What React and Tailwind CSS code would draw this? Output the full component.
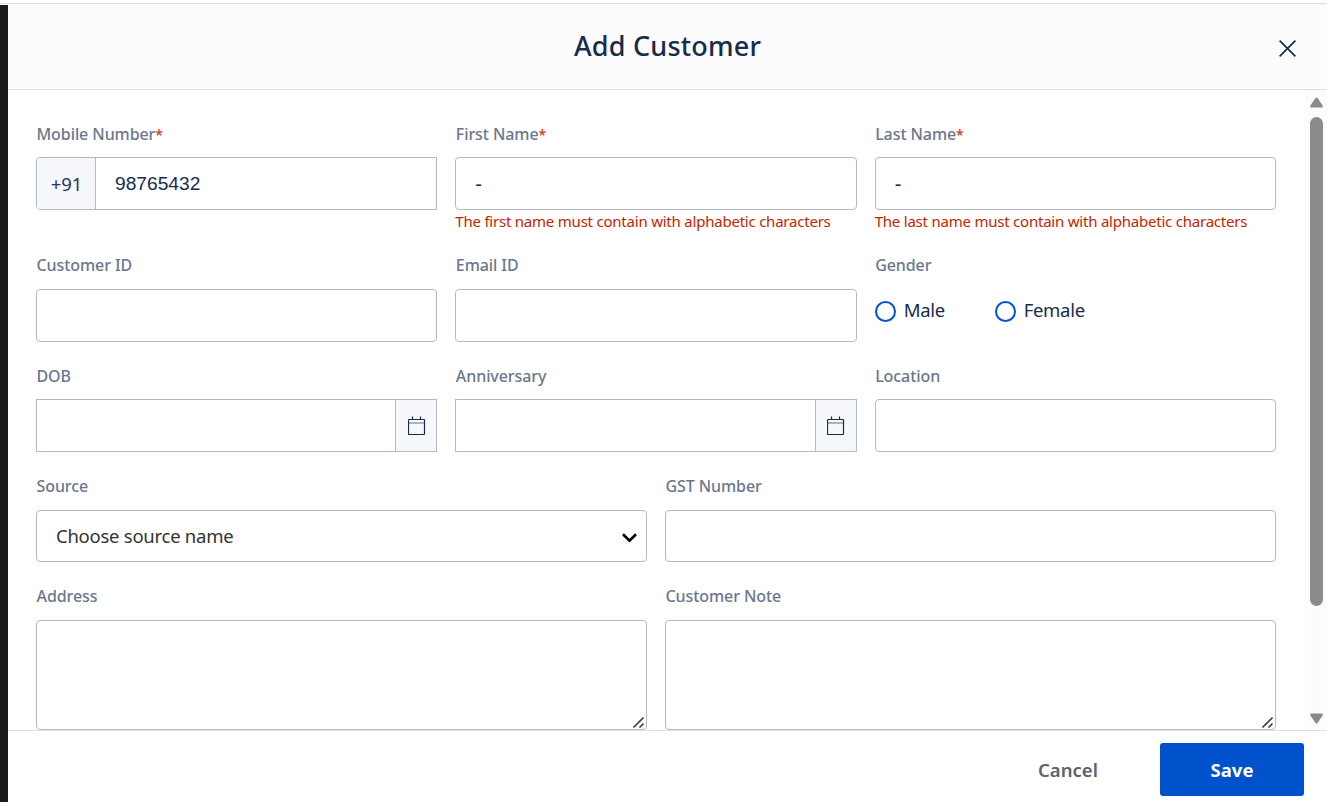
import React, { useState } from 'react';

const inputBase = 'w-full border border-[#b3b9c6] bg-white px-[19px] text-[#172b4d] outline-none';

function Field({ label, required, error, className = '', labelClass = '', children }) {
  return (
    <div className={className}>
      <label className={`block h-9 pl-[0.5px] whitespace-nowrap text-[16px] leading-6 font-medium tracking-[-0.08px] text-[#6b778c] ${labelClass}`}>
        {label}
        {required && <span className="text-[14px] text-[#de350b]">*</span>}
      </label>
      {children}
      {error && (
        <p className="-mt-px whitespace-nowrap text-[15px] leading-6 tracking-[-0.22px] text-[#bf2600]">{error}</p>
      )}
    </div>
  );
}

function CalendarIcon() {
  return (
    <svg className="ml-px" width="18" height="20" viewBox="0 0 18 20" fill="none" stroke="#172b4d">
      <rect x="0.5" y="3.5" width="16" height="15" rx="0.5" strokeWidth="1.2" />
      <path d="M0.5 7H16.5" strokeOpacity="0.65" />
      <path d="M4.5 0.5V3.5M12.5 0.5V3.5" strokeWidth="1.2" />
    </svg>
  );
}

function DateInput() {
  return (
    <div className="flex h-[53px] border border-[#b3b9c6]">
      <input className="min-w-0 flex-1 bg-white px-[19px] outline-none" />
      <button className="flex w-[41px] items-center justify-center border-l border-[#b3b9c6] bg-[#f5f7fa]">
        <CalendarIcon />
      </button>
    </div>
  );
}

function NoteArea() {
  return (
    <div className="relative">
      <textarea className={`${inputBase} block h-[110px] resize-none rounded-[4px]`} />
      <svg className="absolute right-[3px] bottom-[2px]" width="11" height="11" viewBox="0 0 11 11" stroke="#444" strokeWidth="1.6">
        <path d="M0.5 10.5L10.5 0.5M6.5 10.5L10.5 6.5" />
      </svg>
    </div>
  );
}

function Radio({ label, checked, onChange }) {
  return (
    <label className="flex items-center gap-2 text-[18.5px] leading-6 tracking-[-0.3px] text-[#172b4d]">
      <input
        type="radio"
        name="gender"
        checked={checked}
        onChange={onChange}
        className="mt-0.5 h-[21px] w-[21px] appearance-none rounded-full border-2 border-[#0052cc] bg-white checked:border-[6px]"
      />
      {label}
    </label>
  );
}

function Scrollbar() {
  return (
    <div className="flex w-[22px] flex-col items-center bg-[#fcfcfc] pt-[7px] pl-px pb-[6px]">
      <svg className="shrink-0" width="13" height="11" viewBox="0 0 14 11" fill="#8b8b8b">
        <path d="M5.9 0.6Q7 -0.5 8.1 0.6L13.6 8.6Q14.2 10.9 12.6 11H1.4Q-0.2 10.9 0.4 8.6Z" />
      </svg>
      <div className="mt-[9px] h-[489px] w-[13px] rounded-full bg-[#8b8b8b]" />
      <svg className="mt-auto shrink-0" width="13" height="11" viewBox="0 0 14 11" fill="#8b8b8b">
        <path d="M5.9 10.4Q7 11.5 8.1 10.4L13.6 2.4Q14.2 0.1 12.6 0H1.4Q-0.2 0.1 0.4 2.4Z" />
      </svg>
    </div>
  );
}

export default function App() {
  const [mobile, setMobile] = useState('98765432');
  const [firstName, setFirstName] = useState('-');
  const [lastName, setLastName] = useState('-');
  const [gender, setGender] = useState('');

  return (
    <div className="flex h-[802px] w-[1327px] flex-col overflow-hidden bg-white font-['Noto_Sans',sans-serif]">
      <div className="h-1 shrink-0 border-b border-[#dedede]" />
      <div className="h-px shrink-0 bg-[#fcfcfc]" />
      <div className="flex min-h-0 flex-1">
        <div className="w-2 shrink-0 bg-[#1a1a1a]" />

        <div className="flex min-w-0 flex-1 flex-col">
          <header className="flex h-[85px] shrink-0 items-center border-b border-[#dedfe2] bg-[#fcfcfc] pr-[31px] pl-12">
            <h1 className="flex-1 pb-px text-center text-[27px] font-medium tracking-[0.2px] text-[#172b4d]">
              Add Customer
            </h1>
            <button aria-label="Close" className="pt-[3px]">
              <svg width="17" height="17" viewBox="0 0 17 17" stroke="#172b4d" strokeWidth="1.7">
                <path d="M0.6 0.6L16.4 16.4M16.4 0.6L0.6 16.4" />
              </svg>
            </button>
          </header>

          <div className="flex h-[640px] shrink-0">
            <main className="flex-1 pt-[31px] pr-[29px] pl-7">
              <div className="grid grid-cols-6 grid-rows-[132px_110px_111px_110px_146px] gap-x-[18px]">
                <Field label="Mobile Number" required className="col-span-2" labelClass="pt-px">
                  <div className="flex h-[53px] overflow-hidden rounded-l-[4px] border border-[#b3b9c6]">
                    <span className="flex w-[59px] items-center justify-center border-r border-[#b3b9c6] bg-[#f5f7fa] pt-px pl-px text-[18.5px] text-[#253858]">
                      +91
                    </span>
                    <input
                      value={mobile}
                      onChange={(e) => setMobile(e.target.value)}
                      className="min-w-0 flex-1 px-[19px] pt-px font-['Liberation_Sans',sans-serif] text-[19.2px] text-[#172b4d] outline-none"
                    />
                  </div>
                </Field>
                <Field
                  label="First Name"
                  required
                  error="The first name must contain with alphabetic characters"
                  className="col-span-2"
                  labelClass="pt-px"
                >
                  <input
                    value={firstName}
                    onChange={(e) => setFirstName(e.target.value)}
                    className={`${inputBase} block h-[53px] rounded-[4px] pt-0.5 font-['Liberation_Sans',sans-serif] text-[20px]`}
                  />
                </Field>
                <Field
                  label="Last Name"
                  required
                  error="The last name must contain with alphabetic characters"
                  className="col-span-2"
                  labelClass="pt-px"
                >
                  <input
                    value={lastName}
                    onChange={(e) => setLastName(e.target.value)}
                    className={`${inputBase} block h-[53px] rounded-[4px] pt-0.5 font-['Liberation_Sans',sans-serif] text-[20px]`}
                  />
                </Field>

                <Field label="Customer ID" className="col-span-2">
                  <input className={`${inputBase} block h-[53px] rounded-[4px]`} />
                </Field>
                <Field label="Email ID" className="col-span-2">
                  <input className={`${inputBase} block h-[53px] rounded-[4px]`} />
                </Field>
                <Field label="Gender" className="col-span-2">
                  <div className="flex pt-[9px]">
                    <div className="w-[120px]">
                      <Radio label="Male" checked={gender === 'male'} onChange={() => setGender('male')} />
                    </div>
                    <Radio label="Female" checked={gender === 'female'} onChange={() => setGender('female')} />
                  </div>
                </Field>

                <Field label="DOB" className="col-span-2" labelClass="pt-px">
                  <DateInput />
                </Field>
                <Field label="Anniversary" className="col-span-2" labelClass="pt-px">
                  <DateInput />
                </Field>
                <Field label="Location" className="col-span-2" labelClass="pt-px">
                  <input className={`${inputBase} block h-[53px] rounded-[4px]`} />
                </Field>

                <Field label="Source" className="col-span-3">
                  <button className={`${inputBase} flex h-[52px] items-center justify-between rounded-[4px] pr-[9px] text-[18.5px]`}>
                    <span className="tracking-[-0.26px] text-[#333]">Choose source name</span>
                    <svg className="mt-[3px]" width="15" height="10" viewBox="0 0 15 10" fill="none" stroke="#000" strokeWidth="2.6">
                      <path d="M1 1.2L7.5 7.6L14 1.2" />
                    </svg>
                  </button>
                </Field>
                <Field label="GST Number" className="col-span-3">
                  <input className={`${inputBase} block h-[52px] rounded-[4px]`} />
                </Field>

                <Field label="Address" className="col-span-3">
                  <NoteArea />
                </Field>
                <Field label="Customer Note" className="col-span-3">
                  <NoteArea />
                </Field>
              </div>
            </main>
            <Scrollbar />
          </div>

          <footer className="flex flex-1 items-start justify-end border-t border-[#dfe1e6] pt-3 pr-[23px]">
            <button className="h-[53px] w-[184px] text-[18.5px] font-semibold tracking-[0.05px] text-[#5b6270]">Cancel</button>
            <button className="h-[53px] w-36 rounded-[3px] bg-[#0052cc] text-[18.5px] font-bold text-white">Save</button>
          </footer>
        </div>
      </div>
    </div>
  );
}
